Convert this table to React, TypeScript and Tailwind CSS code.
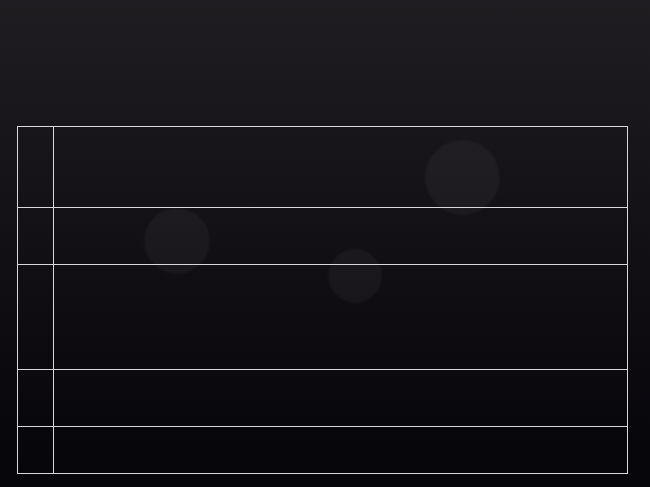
import React from 'react';

const rows = [81, 57, 105, 57, 47];

const App: React.FC = () => {
  return (
    <div className="relative w-[650px] h-[487px] overflow-hidden bg-gradient-to-b from-[#1f1d20] to-[#06050a] font-['Liberation_Sans',sans-serif]">
      {/* bokeh */}
      <div className="absolute left-[425px] top-[140px] w-[75px] h-[75px] rounded-full bg-white/[0.04] blur-[1px]" />
      <div className="absolute left-[144px] top-[208px] w-[66px] h-[66px] rounded-full bg-white/[0.04] blur-[1px]" />
      <div className="absolute left-[328px] top-[249px] w-[54px] h-[54px] rounded-full bg-white/[0.04] blur-[1px]" />

      <div className="relative pt-[126px] pl-[17px]">
        <table className="w-[611px] border-collapse">
          <tbody>
            {rows.map((h, i) => (
              <tr key={i} style={{ height: h }}>
                <td className="w-[36px] border border-[#d8d8d8] p-0" />
                <td className="border border-[#d8d8d8] p-0" />
              </tr>
            ))}
          </tbody>
        </table>
      </div>
    </div>
  );
};

export default App;
